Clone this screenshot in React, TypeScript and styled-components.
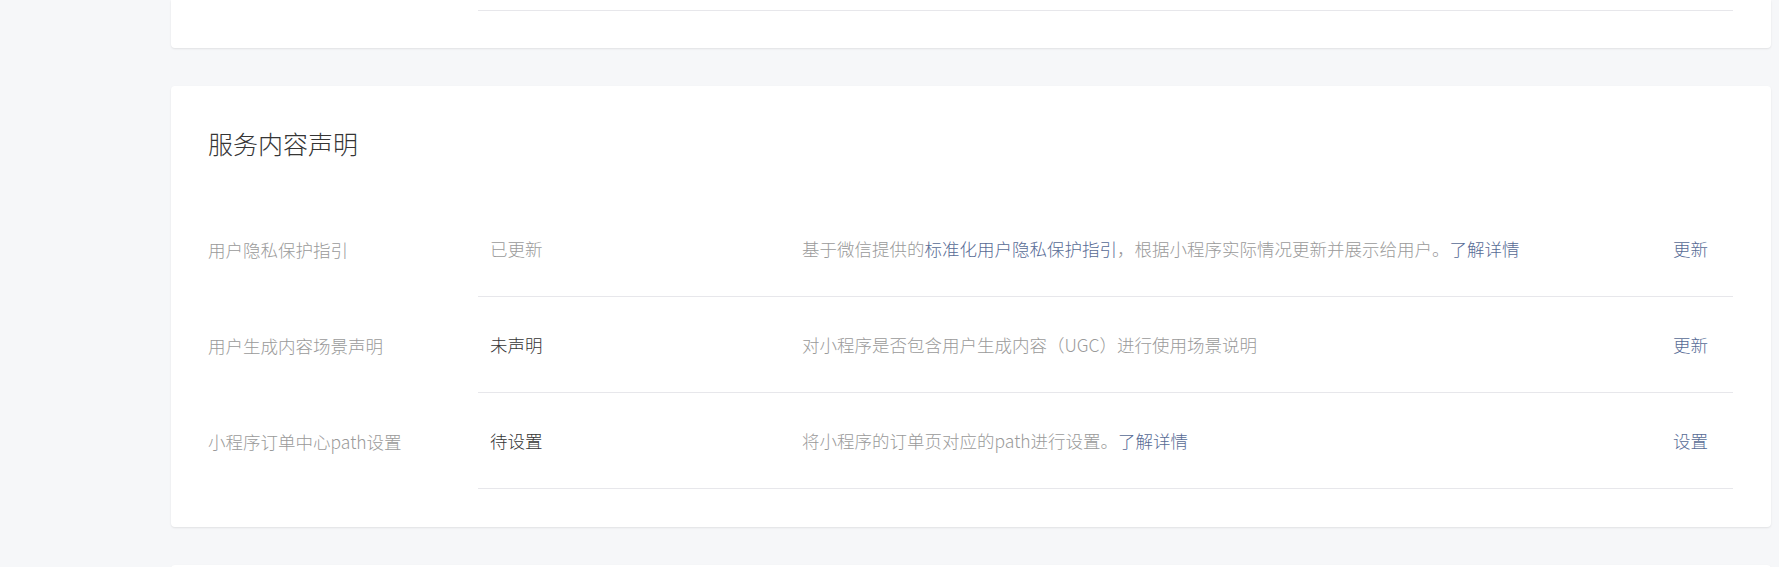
import styled, { createGlobalStyle } from "styled-components";

const GlobalStyle = createGlobalStyle`
  html, body {
    margin: 0;
    padding: 0;
    background: #f6f7f9;
    font-family: "Noto Sans CJK SC", "Noto Sans", sans-serif;
    -webkit-font-smoothing: antialiased;
  }
`;

const Page = styled.div`
  display: flex;
  flex-direction: column;
  gap: 38px;
  padding-left: 171px;
  height: 567px;
  overflow: hidden;
`;

const Card = styled.section<{ $cut?: boolean }>`
  width: 1600px;
  box-sizing: border-box;
  background: #fff;
  border-radius: ${(p) => (p.$cut ? "0 0 4px 4px" : "4px")};
  box-shadow: 0 1px 2px rgba(0, 0, 0, 0.09);
  padding: ${(p) => (p.$cut ? "0 38px 37px 37px" : "40px 38px 38px 37px")};
  flex-shrink: 0;
`;

const TopDivider = styled.div`
  margin-left: 270px;
  height: 10px;
  border-bottom: 1px solid #e7e7eb;
`;

const Title = styled.h2`
  margin: 0 0 40px;
  font-size: 25px;
  line-height: 35px;
  font-weight: 300;
  color: #353535;
`;

const Row = styled.div`
  display: flex;
  align-items: stretch;
  height: 96px;
  font-size: 17.5px;
  font-weight: 300;
`;

const Label = styled.div`
  width: 270px;
  display: flex;
  align-items: center;
  color: #9a9a9a;
`;

const Body = styled.div`
  flex: 1;
  display: flex;
  align-items: center;
  border-bottom: 1px solid #e7e7eb;
  padding: 0 25px 0 12px;
`;

const Status = styled.div<{ $muted?: boolean }>`
  width: 312px;
  color: ${(p) => (p.$muted ? "#9a9a9a" : "#353535")};
`;

const Desc = styled.div`
  flex: 1;
  color: #9a9a9a;
`;

const Link = styled.a`
  color: #576b95;
  text-decoration: none;
  cursor: pointer;
`;

const Action = styled(Link)`
  margin-left: auto;
`;

type Item = {
  label: string;
  status: string;
  muted?: boolean;
  desc: React.ReactNode;
  action: string;
};

const items: Item[] = [
  {
    label: "用户隐私保护指引",
    status: "已更新",
    muted: true,
    desc: (
      <>
        基于微信提供的<Link>标准化用户隐私保护指引</Link>，根据小程序实际情况更新并展示给用户。
        <Link>了解详情</Link>
      </>
    ),
    action: "更新",
  },
  {
    label: "用户生成内容场景声明",
    status: "未声明",
    desc: "对小程序是否包含用户生成内容（UGC）进行使用场景说明",
    action: "更新",
  },
  {
    label: "小程序订单中心path设置",
    status: "待设置",
    desc: (
      <>
        将小程序的订单页对应的path进行设置。<Link>了解详情</Link>
      </>
    ),
    action: "设置",
  },
];

export default function App() {
  return (
    <>
      <GlobalStyle />
      <Page>
        <Card $cut>
          <TopDivider />
        </Card>
        <Card>
          <Title>服务内容声明</Title>
          {items.map((it) => (
            <Row key={it.label}>
              <Label>{it.label}</Label>
              <Body>
                <Status $muted={it.muted}>{it.status}</Status>
                <Desc>{it.desc}</Desc>
                <Action>{it.action}</Action>
              </Body>
            </Row>
          ))}
        </Card>
        <Card>
          <Title>&nbsp;</Title>
        </Card>
      </Page>
    </>
  );
}
